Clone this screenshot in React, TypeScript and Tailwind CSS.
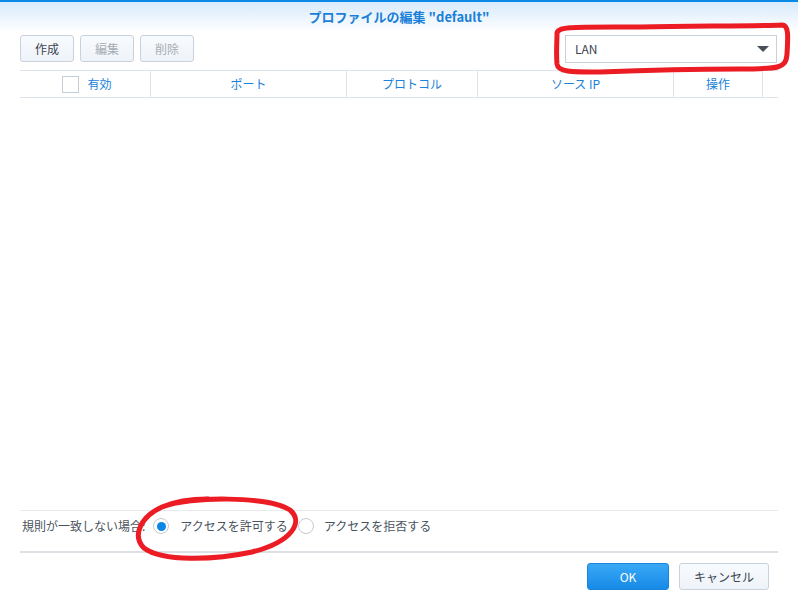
import React from "react";

const font = { fontFamily: '"Noto Sans CJK JP", "Noto Sans", sans-serif' };

const ToolButton = ({ label, disabled }: { label: string; disabled?: boolean }) => (
  <button
    className={`w-[54px] h-[27px] rounded-[3px] border border-[#c8d1dc] bg-gradient-to-b from-[#f8fbfe] to-[#eef3f8] text-[12px] ${
      disabled ? "text-[#a7adb4]" : "text-[#3a4450]"
    }`}
  >
    {label}
  </button>
);

const Radio = ({ checked }: { checked?: boolean }) => (
  <span className="w-[16px] h-[16px] rounded-full border border-[#c3cbd5] bg-white flex items-center justify-center">
    {checked && <span className="w-[9px] h-[9px] rounded-full bg-[#0a86e6]" />}
  </span>
);

const App = () => {
  return (
    <div
      className="relative w-[798px] h-[598px] bg-white flex flex-col border-t-2 border-[#0a8ae6] overflow-hidden"
      style={font}
    >
      {/* title */}
      <div className="h-[30px] shrink-0 bg-gradient-to-b from-[#d8eafb] to-white flex items-center justify-center">
        <span className="text-[13px] font-bold text-[#1a7fd8]">プロファイルの編集 "default"</span>
      </div>

      {/* toolbar */}
      <div className="shrink-0 h-[27px] mt-[3px] mb-[8px] px-[20px] flex items-center justify-between">
        <div className="flex gap-[6px]">
          <ToolButton label="作成" />
          <ToolButton label="編集" disabled />
          <ToolButton label="削除" disabled />
        </div>
        <div className="w-[212px] h-[28px] border border-[#c8d1dc] bg-white flex items-center justify-between pl-[9px] pr-[7px] mr-[1px]">
          <span className="text-[12px] text-[#3a4450]">LAN</span>
          <span className="w-0 h-0 border-l-[6px] border-r-[6px] border-t-[6px] border-l-transparent border-r-transparent border-t-[#4a5058]" />
        </div>
      </div>

      {/* table header */}
      <div className="shrink-0 mx-[20px] h-[28px] border-y border-[#dde4ec] flex text-[12px] text-[#1a82d9]">
        <div className="w-[131px] border-r border-[#dde4ec] flex items-center justify-center gap-[8px] pl-[4px]">
          <span className="w-[17px] h-[17px] border border-[#c5cdd6] bg-white" />
          <span>有効</span>
        </div>
        <div className="w-[196px] border-r border-[#dde4ec] flex items-center justify-center">ポート</div>
        <div className="w-[131px] border-r border-[#dde4ec] flex items-center justify-center">プロトコル</div>
        <div className="w-[196px] border-r border-[#dde4ec] flex items-center justify-center">ソース IP</div>
        <div className="w-[89px] border-r border-[#dde4ec] flex items-center justify-center">操作</div>
        <div className="flex-1" />
      </div>

      <div className="flex-1" />

      {/* policy row */}
      <div className="shrink-0 mx-[20px] h-[43px] pb-[10px] border-t border-[#e6ebf0] border-b-2 border-b-[#dcdfe3] flex items-center text-[12px] text-[#4a535d] pl-[2px]">
        <span>規則が一致しない場合:</span>
        <span className="ml-[8px] flex items-center gap-[11px]">
          <Radio checked />
          <span>アクセスを許可する</span>
        </span>
        <span className="ml-[10px] flex items-center gap-[10px]">
          <Radio />
          <span>アクセスを拒否する</span>
        </span>
      </div>

      {/* footer buttons */}
      <div className="shrink-0 h-[27px] mt-[10px] mb-[8px] pr-[29px] flex justify-end gap-[10px]">
        <button className="w-[82px] h-[27px] rounded-[3px] border border-[#1a84dc] bg-gradient-to-b from-[#38a8f6] to-[#168ae6] text-white text-[12px]">
          OK
        </button>
        <button className="w-[90px] h-[27px] rounded-[3px] border border-[#c8d1dc] bg-gradient-to-b from-[#f8fbfe] to-[#eef3f8] text-[#3a4450] text-[12px]">
          キャンセル
        </button>
      </div>

      {/* red annotations */}
      <svg className="absolute left-0 top-0 pointer-events-none" width="798" height="598">
        <path
          d="M 557 32 C 556 24, 575 25, 640 25 C 700 24, 760 24, 782 23 C 789 23, 788 35, 787 52 C 786 66, 780 67, 740 67 C 700 67, 650 68, 600 70 C 570 70, 558 70, 557 62 C 556 50, 557 40, 557 32 Z"
          fill="none"
          stroke="#ec1c24"
          strokeWidth="5"
          strokeLinejoin="round"
        />
        <path
          d="M 162 505 C 190 494, 268 494, 290 508 C 304 520, 292 540, 252 550 C 215 558, 162 560, 144 546 C 132 534, 140 515, 162 505 C 176 499, 192 497, 208 497"
          fill="none"
          stroke="#ec1c24"
          strokeWidth="5"
          strokeLinecap="round"
        />
      </svg>
    </div>
  );
};

export default App;
